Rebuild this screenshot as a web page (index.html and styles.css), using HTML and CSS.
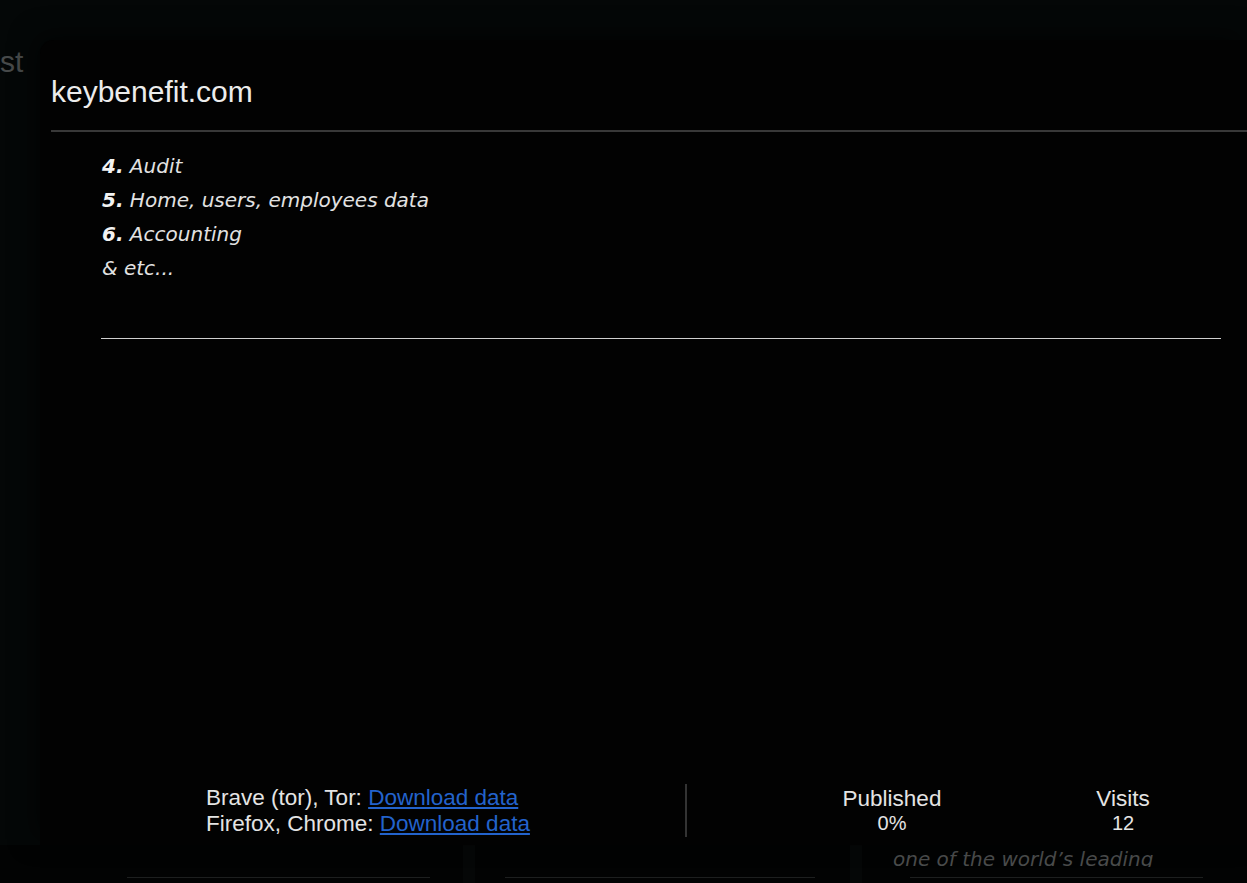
FILE: index.html
```html
<!DOCTYPE html>
<html lang="en">
<head>
<meta charset="utf-8">
<title>keybenefit.com</title>
<link rel="stylesheet" href="styles.css">
</head>
<body>
  <div class="page">
    <div class="bg-top">
      <span class="bg-word">st</span>
    </div>
    <div class="bg-cards">
      <div class="bg-card bg-card-1"><div class="bg-card-line"></div></div>
      <div class="bg-card bg-card-2"><div class="bg-card-line"></div></div>
      <div class="bg-card bg-card-3">
        <div class="bg-card-text"><span>one of the world’s leading</span></div>
        <div class="bg-card-line"></div>
      </div>
    </div>
  </div>

  <div class="modal">
    <header class="modal-head">
      <h1 class="modal-title">keybenefit.com</h1>
    </header>
    <div class="modal-body">
      <ul class="feature-list">
        <li><b>4.</b> Audit</li>
        <li><b>5.</b> Home, users, employees data</li>
        <li><b>6.</b> Accounting</li>
        <li>&amp; etc...</li>
      </ul>
      <hr class="rule">
    </div>
    <footer class="modal-foot">
      <div class="downloads">
        <div>Brave (tor), Tor: <a href="#">Download data</a></div>
        <div>Firefox, Chrome: <a href="#">Download data</a></div>
      </div>
      <div class="divider"></div>
      <div class="stats">
        <div class="stat">
          <div class="stat-label">Published</div>
          <div class="stat-value">0%</div>
        </div>
        <div class="stat">
          <div class="stat-label">Visits</div>
          <div class="stat-value">12</div>
        </div>
      </div>
    </footer>
  </div>
</body>
</html>
```

FILE: styles.css
```css
html, body {
  margin: 0;
  padding: 0;
}

body {
  width: 1247px;
  height: 883px;
  overflow: hidden;
  background: #040707;
  font-family: "Liberation Sans", Arial, sans-serif;
  position: relative;
}

/* background page (behind the modal) */
.page {
  display: flex;
  flex-direction: column;
  height: 883px;
}

.bg-top {
  height: 845px;
  padding-top: 45px;
  box-sizing: border-box;
}

.bg-word {
  display: block;
  margin-left: 0;
  font-size: 30px;
  line-height: 34px;
  color: #474a4a;
}

.bg-cards {
  display: flex;
  padding-left: 80px;
  background: #020303;
  flex: 1;
}

.bg-card {
  display: flex;
  flex-direction: column;
  justify-content: flex-end;
  padding-bottom: 5px;
  box-sizing: border-box;
}

.bg-card-1 {
  width: 395px;
  border-right: 12px solid #050707;
  padding-left: 47px;
  padding-right: 33px;
}

.bg-card-2 {
  width: 387px;
  border-right: 12px solid #050707;
  padding-left: 30px;
  padding-right: 35px;
}

.bg-card-3 {
  width: 380px;
  padding-left: 48px;
  padding-right: 39px;
}

.bg-card-line {
  height: 1px;
  background: #1d1f1f;
}

.bg-card-text {
  height: 17px;
  overflow: hidden;
  margin: 0 0 10px -17px;
}

.bg-card-text span {
  display: block;
  margin-top: -5px;
  font-family: "DejaVu Sans", sans-serif;
  font-style: italic;
  font-size: 20px;
  line-height: 28px;
  color: #4a4c4c;
  white-space: nowrap;
}

/* modal overlay */
.modal {
  position: absolute;
  left: 40px;
  top: 40px;
  right: 0;
  height: 805px;
  background: #020202;
  border-top-left-radius: 14px;
  box-shadow: -6px -6px 24px rgba(0, 0, 0, 0.5);
  display: flex;
  flex-direction: column;
  color: #e6e6e6;
}

.modal-head {
  margin-left: 11px;
  padding: 34px 0 20px 0;
  border-bottom: 2px solid #383838;
}

.modal-title {
  margin: 0;
  font-family: "Liberation Sans", Arial, sans-serif;
  font-weight: normal;
  font-size: 30px;
  line-height: 36px;
  color: #ececec;
}

.modal-body {
  padding: 17px 26px 0 61px;
}

.feature-list {
  list-style: none;
  margin: 0;
  padding: 0 0 0 1px;
  font-family: "DejaVu Sans", sans-serif;
  font-style: italic;
  font-size: 20px;
  line-height: 34px;
  color: #e2e2e2;
}

.feature-list b {
  font-weight: bold;
  color: #f2f2f2;
}

.rule {
  margin: 53px 0 0 0;
  border: 0;
  height: 1px;
  background: #cfcfcf;
}

.modal-foot {
  margin-top: auto;
  margin-bottom: 8px;
  display: flex;
  align-items: stretch;
  padding-left: 166px;
  font-family: "Liberation Sans", Arial, sans-serif;
  color: #e4e4e4;
}

.downloads {
  width: 479px;
  font-size: 22.5px;
  line-height: 26px;
  padding-top: 1px;
}

.downloads a {
  color: #2363cc;
  text-decoration: underline;
}

.divider {
  width: 2px;
  background: #333333;
}

.stats {
  display: flex;
  gap: 31px;
  margin-left: 105px;
  padding-top: 2px;
}

.stat {
  width: 200px;
  text-align: center;
}

.stat-label {
  font-size: 22.5px;
  line-height: 26px;
}

.stat-value {
  font-size: 20px;
  line-height: 23px;
}
```
